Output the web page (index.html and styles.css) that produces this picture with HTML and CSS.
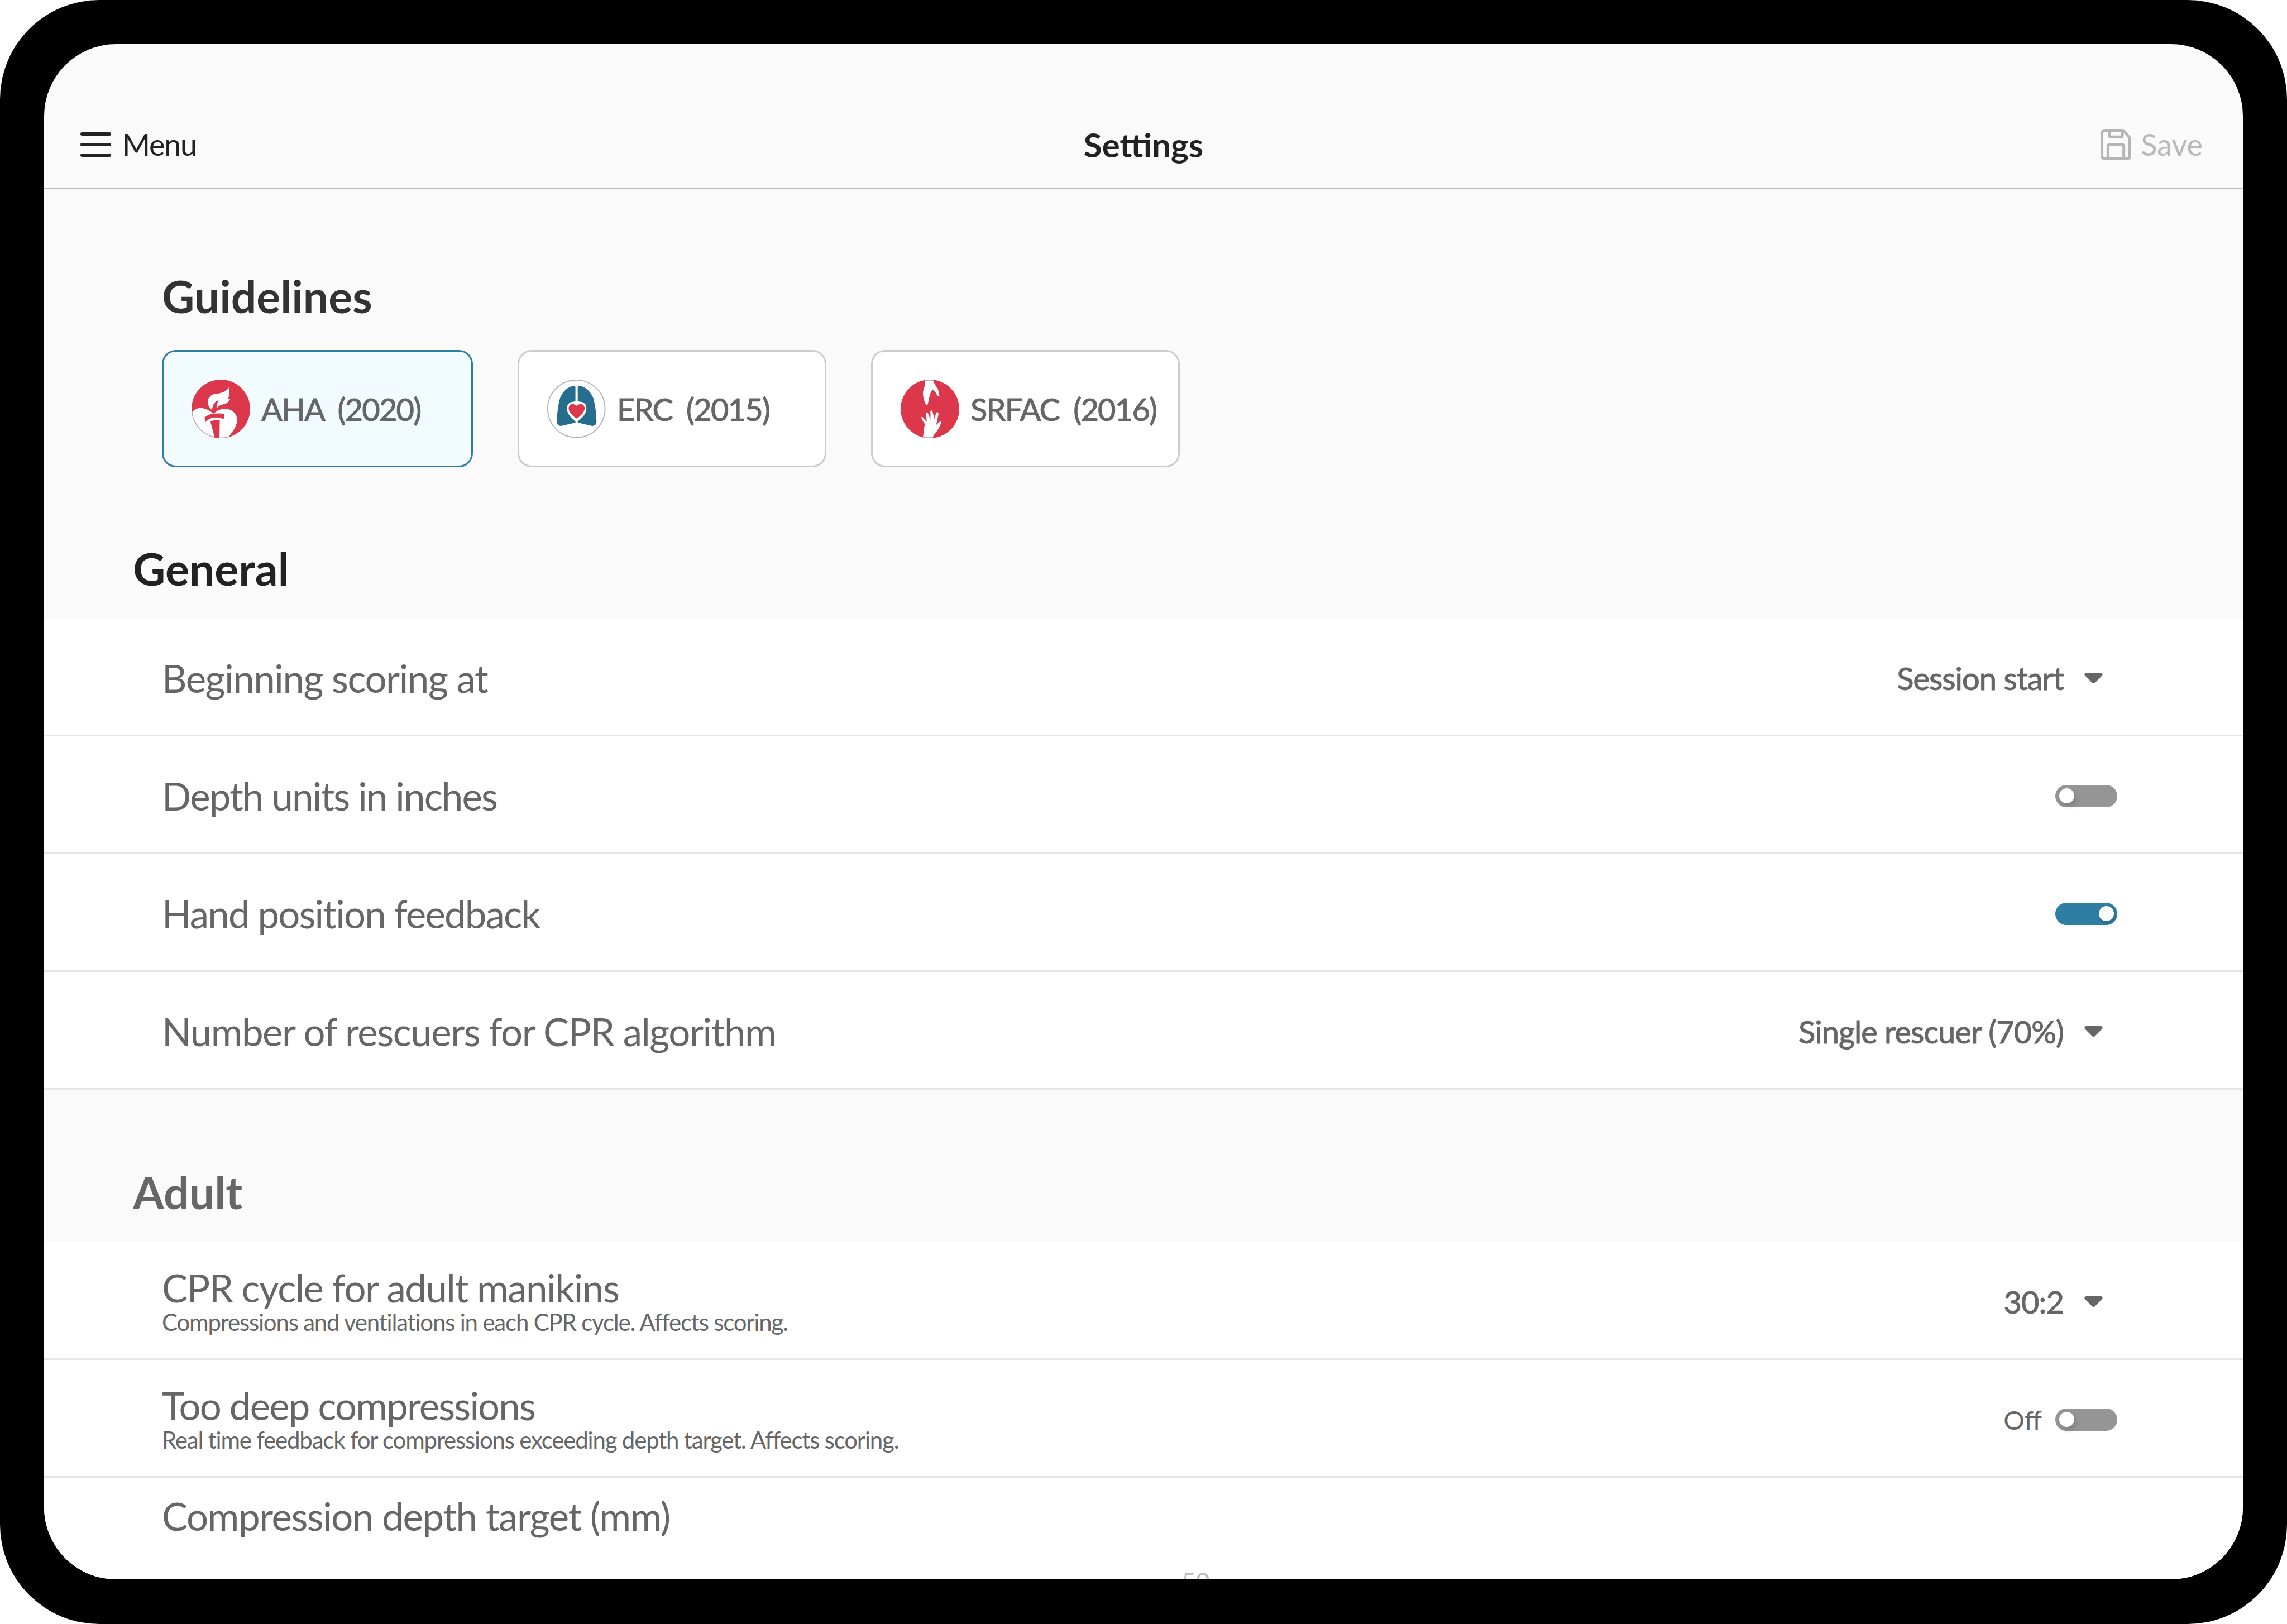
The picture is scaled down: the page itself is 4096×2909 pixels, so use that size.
FILE: index.html
```html
<!DOCTYPE html>
<html lang="en">
<head>
<meta charset="utf-8">
<title>Settings</title>
<link rel="stylesheet" href="styles.css">
</head>
<body>
<div class="device">
  <div class="screen">
    <header class="topbar">
      <div class="menu">
        <svg class="menu-icon" viewBox="0 0 55 44"><path d="M3 3H52M3 22H52M3 41H52"/></svg>
        <span>Menu</span>
      </div>
      <div class="title">Settings</div>
      <div class="save">
        <svg class="save-icon" viewBox="0 0 66 67"><path d="M10 3H47Q49 3 51 5L61 17Q63 19 63 22V57Q63 64 56 64H10Q3 64 3 57V10Q3 3 10 3Z"/><path d="M19 3V13Q19 17 23 17H43Q47 17 47 13V5"/><path d="M16 64V38Q16 33 21 33H45Q50 33 50 38V64"/></svg>
        <span>Save</span>
      </div>
    </header>
    <main>
      <h2 class="guide-title">Guidelines</h2>
      <div class="chips">
        <div class="chip chip-on">
          <svg class="logo" viewBox="63 72 384 384">
            <defs>
              <clipPath id="ahaOuter"><circle cx="255" cy="264" r="192"/></clipPath>
              <clipPath id="ahaInner"><circle cx="255" cy="264" r="187"/></clipPath>
              <path id="ahaHeart" d="M60 292Q85 262 118 258Q165 258 205 296L212 292Q235 268 275 262Q330 262 355 305Q372 350 340 400L300 456H60Z"/>
            </defs>
            <circle cx="255" cy="264" r="192" class="red"/>
            <use href="#ahaHeart" class="rim" clip-path="url(#ahaOuter)"/>
            <use href="#ahaHeart" class="white" clip-path="url(#ahaInner)"/>
            <path class="red" d="M148 322Q170 300 205 296Q240 290 277 296L274 330Q230 312 190 325Q170 332 156 350Z"/>
            <path class="red" d="M187 347Q215 333 248 337L246 458L216 456Z"/>
            <path class="white" d="M305 122Q322 165 300 197Q310 198 318 195Q305 228 265 236Q240 242 232 256Q222 232 243 209Q205 212 197 272Q170 245 168 222Q172 180 205 168Q290 160 305 122Z"/>
          </svg>
          <span>AHA&nbsp; (2020)</span>
        </div>
        <div class="chip">
          <svg class="logo" viewBox="55 72 384 384">
            <circle cx="246" cy="263" r="188" class="ring"/>
            <path class="lung" d="M225 113Q240 111 240 125V215Q208 216 192 232Q176 260 192 292Q210 325 240 344V354L150 375Q122 378 118 350Q120 260 140 190Q170 125 225 113Z"/>
            <path class="lung" d="M271 113Q256 111 255 125V215Q288 216 304 232Q320 260 304 292Q286 325 255 344V354L346 375Q374 378 378 350Q376 260 356 190Q326 125 271 113Z"/>
            <path class="red" d="M248 243Q230 228 212 233Q190 245 198 275Q212 305 248 327Q284 305 298 275Q306 245 284 233Q266 228 248 243Z"/>
          </svg>
          <span>ERC&nbsp; (2015)</span>
        </div>
        <div class="chip">
          <svg class="logo" viewBox="48 72 384 384">
            <defs>
              <clipPath id="srOuter"><circle cx="240" cy="264" r="192"/></clipPath>
              <clipPath id="srInner"><circle cx="240" cy="264" r="186"/></clipPath>
              <path id="srTop" d="M210 60H255Q265 100 290 130Q300 155 302 180Q290 183 285 170Q270 140 258 138Q245 145 235 190Q228 225 222 242Q212 240 210 225Q192 190 195 150Q210 110 210 60Z"/>
              <path id="srBottom" d="M195 470Q198 390 208 365Q190 340 183 320Q190 312 198 325L220 350Q218 320 214 292Q222 278 230 300L243 335Q245 300 243 280Q250 265 258 285L268 330Q275 310 282 288Q292 280 296 295Q290 330 280 370Q295 355 308 345Q318 345 312 358Q300 390 285 410Q265 425 252 470Z"/>
            </defs>
            <circle cx="240" cy="264" r="192" class="red"/>
            <use href="#srTop" class="rim" clip-path="url(#srOuter)"/>
            <use href="#srBottom" class="rim" clip-path="url(#srOuter)"/>
            <use href="#srTop" class="white" clip-path="url(#srInner)"/>
            <use href="#srBottom" class="white" clip-path="url(#srInner)"/>
          </svg>
          <span>SRFAC&nbsp; (2016)</span>
        </div>
      </div>

      <h2 class="section-title">General</h2>
      <div class="rows">
        <div class="row">
          <div class="row-title">Beginning scoring at</div>
          <div class="select"><span>Session start</span><svg class="caret" viewBox="0 0 33 20"><path d="M3 0H30Q34 1 32 5L19 18Q16.500 20 14 18L1 5Q-1 1 3 0Z"/></svg></div>
        </div>
        <div class="row">
          <div class="row-title row-title-tight">Depth units in inches</div>
          <div class="toggle"><i class="knob"></i></div>
        </div>
        <div class="row">
          <div class="row-title row-title-tight">Hand position feedback</div>
          <div class="toggle toggle-on"><i class="knob"></i></div>
        </div>
        <div class="row">
          <div class="row-title">Number of rescuers for CPR algorithm</div>
          <div class="select"><span>Single rescuer (70%)</span><svg class="caret" viewBox="0 0 33 20"><path d="M3 0H30Q34 1 32 5L19 18Q16.500 20 14 18L1 5Q-1 1 3 0Z"/></svg></div>
        </div>
      </div>

      <h2 class="section-title section-muted">Adult</h2>
      <div class="rows">
        <div class="row">
          <div>
            <div class="row-title">CPR cycle for adult manikins</div>
            <div class="row-sub">Compressions and ventilations in each CPR cycle. Affects scoring.</div>
          </div>
          <div class="select"><span>30:2</span><svg class="caret" viewBox="0 0 33 20"><path d="M3 0H30Q34 1 32 5L19 18Q16.500 20 14 18L1 5Q-1 1 3 0Z"/></svg></div>
        </div>
        <div class="row">
          <div>
            <div class="row-title row-title-tight">Too deep compressions</div>
            <div class="row-sub">Real time feedback for compressions exceeding depth target. Affects scoring.</div>
          </div>
          <div class="switch-wrap"><span class="off">Off</span><div class="toggle"><i class="knob"></i></div></div>
        </div>
        <div class="row-open">
          <div class="row-title">Compression depth target (mm)</div>
          <div class="tick">50</div>
        </div>
      </div>
    </main>
  </div>
</div>
</body>
</html>
```

FILE: styles.css
```css
* { box-sizing: border-box; }
html, body { margin: 0; padding: 0; background: #fff; }
body { font-family: Lato, "Noto Sans", sans-serif; width: 4096px; height: 2909px; overflow: hidden; }
.device { width: 4096px; height: 2909px; background: #000; border-radius: 178px; padding: 79px 79px 80px; }
.screen { width: 3938px; height: 2750px; background: #fafafa; border-radius: 129px; overflow: hidden; }

.topbar { height: 260px; padding: 102px 65px 0; border-bottom: 3px solid #bbb; display: grid; grid-template-columns: 1fr auto 1fr; align-items: center; }
.menu { display: flex; align-items: center; gap: 20px; font-size: 54px; letter-spacing: -1.3px; color: #222; }
.menu-icon { width: 55px; height: 44px; fill: none; stroke: #222; stroke-width: 6; stroke-linecap: round; }
.title { font-size: 60px; font-weight: 700; color: #222; }
.save { display: flex; align-items: center; justify-content: flex-end; gap: 17px; padding-right: 7px; font-size: 54px; color: #b8b8b8; }
.save-icon { width: 55px; height: 56px; fill: none; stroke: #b5b5b5; stroke-width: 6; stroke-linejoin: round; }

.guide-title { margin: 143px 0 49px 211px; font-size: 80.5px; line-height: 96px; font-weight: 700; color: #333; }
.chips { display: flex; gap: 80px; margin-left: 211px; }
.chip { width: 553px; height: 210px; padding-left: 50px; display: flex; align-items: center; gap: 20px; background: #fff; border: 3px solid #ccc; border-radius: 25px; font-size: 56px; font-weight: 400; letter-spacing: -1.8px; -webkit-text-stroke: 1px #666; color: #666; white-space: nowrap; }
.chip-on { width: 557px; background: #f2fbfe; border-color: #2e7ea3; }
.logo { width: 105px; height: 105px; flex: none; }
.red { fill: #dd374c; }
.white { fill: #fff; }
.rim { fill: #b0b0b0; }
.ring { fill: #fff; stroke: #b3b3b3; stroke-width: 7; }
.lung { fill: #276d8d; }

.section-title { margin: 133px 0 42px 159px; font-size: 80.5px; line-height: 96px; font-weight: 700; color: #222; }
.section-muted { margin-top: 135px; color: #666; }
.rows { background: #fff; }
.row { height: 211px; padding: 5px 225px 0 211px; border-bottom: 3px solid #e6e6e6; display: flex; align-items: center; justify-content: space-between; }
.row-open { padding: 33px 0 0 211px; }
.row-title { font-size: 69px; line-height: 72px; letter-spacing: -1.45px; color: #666; }
.row-title-tight { letter-spacing: -1.85px; }
.row-sub { font-size: 42px; line-height: 50px; letter-spacing: -1.2px; color: #666; }
.select { display: flex; align-items: center; gap: 37px; padding-right: 26px; font-size: 56px; font-weight: 400; letter-spacing: -1px; -webkit-text-stroke: 1px #666; color: #666; }
.caret { width: 33px; height: 20px; fill: #666; }
.switch-wrap { display: flex; align-items: center; gap: 24px; }
.off { font-size: 47px; color: #666; }
.toggle { width: 111px; height: 40px; padding: 6.5px; border-radius: 20px; background: #959595; display: flex; justify-content: flex-start; }
.toggle-on { background: #2e7ea3; justify-content: flex-end; }
.knob { display: block; width: 27px; height: 27px; border-radius: 50%; background: #fff; box-shadow: 3px 6px 10px rgba(0, 0, 0, .15); }
.tick { margin: 58px 0 0 1826px; width: 51px; font-size: 44px; line-height: 44px; color: #bbb; }
```
